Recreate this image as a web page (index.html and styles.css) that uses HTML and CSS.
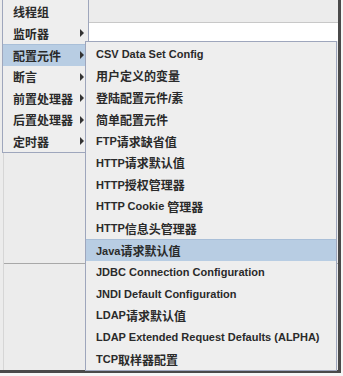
FILE: index.html
```html
<!DOCTYPE html>
<html lang="zh-CN">
<head>
  <meta charset="UTF-8">
  <title>配置元件菜单</title>
  <link rel="stylesheet" href="styles.css">
</head>
<body>
  <div class="screen">
    <div class="toolbar"></div>
    <div class="field"></div>
    <div class="tree">
      <div class="tree-top"></div>
    </div>

    <ul class="menu main-menu">
      <li class="item"><span class="zh">线程组</span></li>
      <li class="item"><span class="zh">监听器</span><span class="arrow"></span></li>
      <li class="item active"><span class="zh">配置元件</span><span class="arrow"></span></li>
      <li class="item"><span class="zh">断言</span><span class="arrow"></span></li>
      <li class="item"><span class="zh">前置处理器</span><span class="arrow"></span></li>
      <li class="item"><span class="zh">后置处理器</span><span class="arrow"></span></li>
      <li class="item"><span class="zh">定时器</span><span class="arrow"></span></li>
    </ul>

    <ul class="menu sub-menu">
      <li class="item">CSV Data Set Config</li>
      <li class="item"><span class="zh">用户定义的变量</span></li>
      <li class="item"><span class="zh">登陆配置元件/素</span></li>
      <li class="item"><span class="zh">简单配置元件</span></li>
      <li class="item">FTP<span class="zh">请求缺省值</span></li>
      <li class="item">HTTP<span class="zh">请求默认值</span></li>
      <li class="item">HTTP<span class="zh">授权管理器</span></li>
      <li class="item">HTTP Cookie&nbsp;<span class="zh">管理器</span></li>
      <li class="item">HTTP<span class="zh">信息头管理器</span></li>
      <li class="item active">Java<span class="zh">请求默认值</span></li>
      <li class="item">JDBC Connection Configuration</li>
      <li class="item">JNDI Default Configuration</li>
      <li class="item">LDAP<span class="zh">请求默认值</span></li>
      <li class="item">LDAP Extended Request Defaults (ALPHA)</li>
      <li class="item">TCP<span class="zh">取样器配置</span></li>
    </ul>
  </div>
</body>
</html>
```

FILE: styles.css
```css
* {
  margin: 0;
  padding: 0;
  box-sizing: border-box;
}

body {
  width: 343px;
  height: 376px;
  overflow: hidden;
  background-color: #f6f6f6;
  font-family: 'Liberation Sans', 'Noto Sans CJK SC', sans-serif;
  font-size: 11px;
  font-weight: bold;
  color: #2a2a2a;
}

.screen {
  position: relative;
  width: 341px;
  height: 373px;
  background-color: #ececec;
  border-right: 3px solid #4a4a4a;
  border-bottom: 3px solid #4a4a4a;
  display: flex;
  flex-direction: column;
}

.toolbar {
  height: 23px;
  margin-left: 89px;
  border-bottom: 1px solid #c8c8c8;
}

.field {
  height: 18px;
  margin-left: 89px;
  background-color: #fff;
}

.tree {
  flex: 1;
  margin-left: 3px;
  border-left: 1px solid #d6d6d6;
}

.tree-top {
  height: 223px;
  border-bottom: 1px solid #a8a8a8;
}

/* popup menus */
.menu {
  position: absolute;
  list-style: none;
  background-color: #eeeeee;
  border: 1px solid #9ea6bc;
}

.main-menu {
  left: 2px;
  top: 0;
  width: 87px;
  border-top: none;
  padding-top: 1px;
}

.sub-menu {
  left: 85px;
  top: 41px;
  width: 252px;
  padding-top: 1px;
}

.item {
  display: flex;
  align-items: center;
  height: 21.6px;
  padding-left: 10px;
  padding-right: 4px;
  white-space: nowrap;
}

.sub-menu .item {
  height: 21.8px;
}

.zh {
  font-size: 12px;
}

.item.active {
  background-color: #b8cde3;
  border-top: 1px solid #a9bfd8;
}

.arrow {
  margin-left: auto;
  width: 0;
  height: 0;
  border-left: 4px solid #333;
  border-top: 4px solid transparent;
  border-bottom: 4px solid transparent;
}
```
